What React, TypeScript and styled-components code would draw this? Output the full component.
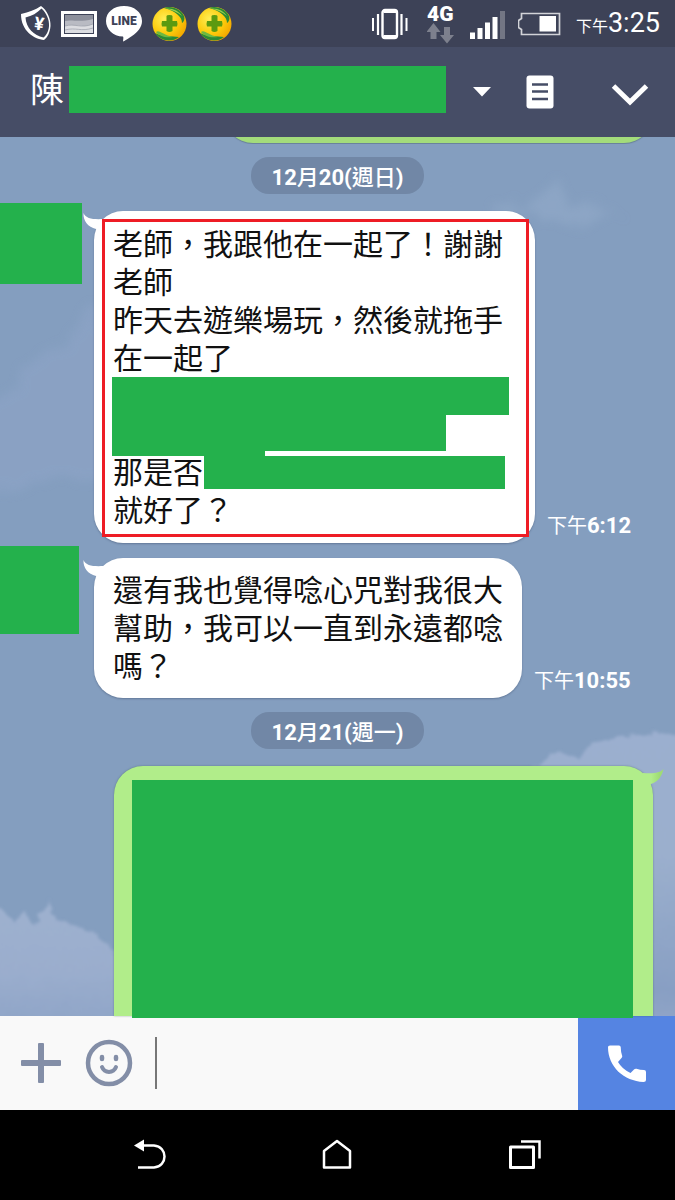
import React from 'react';
import styled, { createGlobalStyle } from 'styled-components';

const GlobalStyle = createGlobalStyle`
  * { box-sizing: border-box; }
  body {
    margin: 0;
    background: #000;
    font-family: Roboto, "Noto Sans CJK TC", sans-serif;
  }
  button {
    display: flex;
    align-items: center;
    justify-content: center;
    margin: 0;
    padding: 0;
    border: 0;
    background: none;
    cursor: pointer;
  }
  svg { display: block; flex: none; }
`;

const MASK = '#24b14c';

const Screen = styled.div`
  display: flex;
  flex-direction: column;
  min-height: 100vh;
`;

const StatusBar = styled.div`
  display: flex;
  align-items: center;
  justify-content: space-between;
  height: 47px;
  padding: 0 15px 0 20px;
  background: #3d4257;
  color: #fff;
`;

const IconGroup = styled.div<{ $gap: number }>`
  display: flex;
  align-items: center;
  gap: ${(p) => p.$gap}px;
`;

const Clock = styled.time`
  display: flex;
  align-items: baseline;
  font-size: 27px;
  line-height: 32px;
`;

const Meridiem = styled.span<{ $size: number }>`
  font-family: "Noto Sans CJK TC", sans-serif;
  font-size: ${(p) => p.$size}px;
  font-weight: 400;
`;

const Header = styled.header`
  display: flex;
  align-items: center;
  height: 90px;
  padding: 0 21px 0 30px;
  background: #464d66;
  color: #fff;
`;

const Title = styled.h1`
  display: flex;
  flex: 0 1 416px;
  align-items: center;
  gap: 5px;
  margin: 0;
  padding-bottom: 5px;
  font-size: 34px;
  font-weight: 400;
  line-height: 48px;
`;

const NameMask = styled.span`
  flex: 1;
  height: 47px;
  background: ${MASK};
`;

const MenuButton = styled.button`
  width: 72px;
  height: 60px;
`;

const NoteButton = styled.button`
  width: 44px;
  height: 60px;
`;

const CollapseButton = styled.button`
  width: 48px;
  height: 60px;
  margin-left: auto;
  padding-top: 6px;
`;

const Chat = styled.main`
  position: relative;
  display: flex;
  flex: 1;
  flex-direction: column;
  background: #849ebf;
  isolation: isolate;
`;

const Sky = styled.svg`
  position: absolute;
  inset: 0;
  z-index: -1;
  width: 100%;
  height: 100%;
`;

const ScrolledOff = styled.div`
  display: flex;
  flex-direction: column;
  justify-content: flex-end;
  align-items: flex-end;
  height: 7px;
  padding-right: 22px;
  overflow: hidden;
`;

const ScrolledBubble = styled.div`
  flex: none;
  width: 429px;
  height: 60px;
  margin-bottom: 1px;
  border-radius: 29px;
  background: #a3dc7b;
  box-shadow: 0 1px 1px rgba(40, 60, 60, 0.3);
`;

const DatePill = styled.div`
  align-self: center;
  height: 37px;
  padding: 0 21px;
  border-radius: 18px;
  background: #7187a6;
  color: #fff;
  font-size: 22px;
  font-weight: 700;
  line-height: 37px;
  white-space: nowrap;
`;

const Cjk = styled.span`
  font-family: "Noto Sans CJK TC", sans-serif;
  font-weight: 500;
`;

const Day = styled.section`
  display: flex;
  flex-direction: column;
  margin-top: 13px;

  & + & { flex: 1; margin-top: 14px; }
`;

const Received = styled.div<{ $drop: number }>`
  display: flex;
  align-items: flex-start;
  margin-top: ${(p) => (p.$drop === 8 ? 9 : 3)}px;

  > :not(:first-child) { margin-top: ${(p) => p.$drop}px; }
`;

const AvatarColumn = styled.div`
  flex: none;
  width: 94px;
`;

const AvatarMask = styled.div<{ $w: number; $h: number }>`
  width: ${(p) => p.$w}px;
  height: ${(p) => p.$h}px;
  background: ${MASK};
`;

const Bubble = styled.div<{ $measure: number; $pad: number }>`
  position: relative;
  flex: 0 1 ${(p) => p.$measure + 38}px;
  padding: ${(p) => p.$pad - 2}px 19px ${(p) => p.$pad + 2}px;
  border-radius: 29px;
  background: #fff;
  box-shadow: 0 1px 2px rgba(50, 65, 95, 0.4);
  color: #111;
  font-family: "Noto Sans CJK TC", sans-serif;
  font-size: 30px;
  line-height: 38px;
`;

const Paragraph = styled.p`
  margin: 0;
`;

const MaskLine = styled.div`
  display: flex;
  height: 38px;
  padding-top: 2px;
  margin-left: -1px;
`;

const MixedLine = styled.div`
  display: flex;
  gap: 1px;
  height: 38px;
`;

const MaskBar = styled.span<{ $w: number; $h: number }>`
  width: ${(p) => p.$w}px;
  height: ${(p) => p.$h}px;
  background: ${MASK};
`;

const InlineMaskBar = styled(MaskBar)`
  margin-top: 5px;
`;

const SteppedMaskBar = styled(MaskBar)`
  position: relative;

  &::after {
    position: absolute;
    top: 100%;
    left: 0;
    width: 153px;
    height: 5px;
    background: ${MASK};
    content: "";
  }
`;

const Highlight = styled.div`
  position: absolute;
  inset: 8px 6px 6px 8px;
  border: 3px solid #ee1c25;
  pointer-events: none;
`;

const LeftTail = styled.svg`
  position: absolute;
  top: 2px;
  left: -11px;
`;

const RightTail = styled.svg`
  position: absolute;
  top: 2px;
  right: -11px;
`;

const Stamp = styled.time`
  align-self: flex-end;
  margin-left: 12px;
  padding-bottom: 4px;
  color: #fff;
  font-size: 22px;
  font-weight: 700;
  line-height: 26px;
  white-space: nowrap;
`;

const SentBubble = styled.div`
  position: relative;
  display: flex;
  flex: 1;
  min-height: 200px;
  margin: 17px 22px 0 114px;
  padding: 14px 20px 0 18px;
  border-radius: 29px 29px 0 0;
  background: #b1ed8a;
  box-shadow: 0 0 2px rgba(50, 80, 80, 0.5);
`;

const SentMask = styled.div`
  position: relative;
  flex: 1;
  margin-bottom: -2px;
  background: ${MASK};
`;

const Composer = styled.form`
  display: flex;
  align-items: stretch;
  height: 94px;
  background: #f9f9f9;
`;

const ChatLayer = styled.div`
  position: relative;
  z-index: 1;
  display: flex;
  flex: 1;
  flex-direction: column;
`;

const ToolButtons = styled.div`
  display: flex;
  align-items: center;
  gap: 19px;
  padding: 0 22px 0 16px;
`;

const ToolButton = styled.button`
  width: 49px;
  height: 60px;
`;

const MessageInput = styled.input`
  flex: 1;
  align-self: center;
  min-width: 0;
  height: 52px;
  margin: 0;
  padding: 0 12px;
  border: 0;
  border-left: 2px solid #777;
  outline: 0;
  background: transparent;
  color: #111;
  font-size: 28px;
`;

const CallButton = styled.button`
  width: 97px;
  background: #5584e2;
`;

const NavBar = styled.nav`
  display: grid;
  grid-template-columns: repeat(3, 1fr);
  height: 90px;
  padding: 0 56px;
  background: #000;
`;

const ShieldIcon = () => (
  <svg width="32" height="36" viewBox="0 0 32 36" fill="none" aria-hidden="true">
    <path d="M1 8 C9 6 15 4 21 0 C27 4 31 13 30.500 20 C30 27 27 32 24 34 C14 33 1 25 1 8Z" fill="#fff" />
    <path d="M5.500 11.500 C12 10 17 7 21.500 2.500 C26.500 7 29.500 14 29 20 C28.500 26 26 29.500 23.500 31.500 C14 29.500 6 22 5.500 11.500Z" fill="#3d4257" />
    <text x="19" y="24" transform="rotate(8 19 19)" textAnchor="middle" fontFamily="Roboto" fontSize="18" fontWeight="700" fill="#fff">¥</text>
  </svg>
);

const PictureIcon = () => (
  <svg width="36" height="28" viewBox="0 0 36 28" aria-hidden="true">
    <path d="M0 1H36V27H0Z M3 4V24H33V4Z" fill="#fff" fillRule="evenodd" />
    <rect x="4" y="5" width="28" height="18" fill="#8d909c" />
    <path d="M4 11 C12 9 17 13 32 9 V23 H4Z" fill="#b9bbc3" />
    <path d="M4 16 C14 13 20 19 32 14 V23 H4Z" fill="#dcdde1" />
    <path d="M4 16 C14 13 20 19 32 14 M4 20 C15 17 20 22 32 18" stroke="#9a9da8" strokeWidth=".7" fill="none" />
  </svg>
);

const LineIcon = () => (
  <svg width="36" height="36" viewBox="0 0 36 36" aria-hidden="true">
    <path d="M18 0 C28 0 36 6 36 15 C36 21 32 26 26 30 C23 32 20 34 17.500 35.500 C16.500 35 18 32 17 30.500 C7 30.500 0 23 0 15 C0 6 8 0 18 0Z" fill="#fff" />
    <text x="18" y="19" textAnchor="middle" fontFamily="Roboto" fontSize="12" fontWeight="900" fill="#3d4257">LINE</text>
  </svg>
);

const HealthIcon = ({ id }: { id: string }) => (
  <svg width="36" height="36" viewBox="0 0 36 36" aria-hidden="true">
    <defs>
      <radialGradient id={id} cx=".35" cy=".35" r=".7">
        <stop offset="0" stopColor="#ffee55" />
        <stop offset=".6" stopColor="#fccb0c" />
        <stop offset="1" stopColor="#f3a800" />
      </radialGradient>
    </defs>
    <circle cx="18.500" cy="18" r="17" fill={`url(#${id})`} />
    <path d="M13 2 C20 -1 30 3 33 10 C34 13 33 16 31 17 C31 11 25 5 13 2Z" fill="#2b8a35" />
    <path d="M15 2.500 C22 2 28 5 31 10 C26 6 21 4 15 2.500Z" fill="#9ad04c" />
    <path d="M4 27 C12 31 21 30 28 31 C21 37 9 35 4 27Z" fill="#2b8a35" />
    <path d="M5 26 C8 23 12 29 22 31 C14 32 8 30 5 26Z" fill="#6cb842" />
    <path d="M15.500 10 Q15.500 9 18.500 9 Q21.500 9 21.500 10 V15 H26 Q27 18 26 20.500 H21.500 V25 Q18.500 27 15.500 25 V20.500 H11 Q10 18 11 15 H15.500Z" fill="#5c9a10" />
  </svg>
);

const VibrateIcon = () => (
  <svg width="43" height="32" viewBox="0 0 43 32" fill="none" stroke="#fff" aria-hidden="true">
    <rect x="10.500" y="2" width="14.500" height="28" rx="2.500" strokeWidth="2.400" />
    <path d="M11.500 3.500H24.500 M11.500 28.500H24.500" strokeWidth="3" />
    <path d="M6 6V27 M29.500 6V27" strokeWidth="2.200" />
    <path d="M1 10V23 M34.500 10V23" strokeWidth="2" />
  </svg>
);

const NetworkIcon = () => (
  <svg width="31" height="46" viewBox="0 -3 31 46" aria-hidden="true">
    <text x="0" y="17" fontFamily="Roboto" fontSize="21" fontWeight="900" fill="#fff">4G</text>
    <path d="M6.500 19 L13.500 28 H9.500 V35 H3.500 V28 H-.5Z M20 39.500 L27 31 H23 V23 H17 V31 H13Z" fill="#7d808d" />
  </svg>
);

const SignalIcon = () => (
  <svg width="36" height="30" viewBox="0 -1 36 30" fill="#fff" aria-hidden="true">
    <path d="M0 22.500h5V29H0Z M7.500 18h5V29h-5Z M15 12.500h5V29h-5Z M22.500 7h5V29h-5Z" />
    <path d="M30 1h5V29h-5Z" fill="#737684" />
  </svg>
);

const BatteryIcon = () => (
  <svg width="46" height="24" viewBox="1 0 46 24" fill="none" aria-hidden="true">
    <path d="M4.500 1.500H42.500V22.500H4.500V17.500L1.500 15.500V8.500L4.500 6.500Z" stroke="#d2d3d8" strokeWidth="1.700" />
    <rect x="22.500" y="4" width="16.500" height="15.500" fill="#fff" />
  </svg>
);

const SkyBackdrop = () => (
  <Sky viewBox="0 0 675 880" preserveAspectRatio="none" aria-hidden="true">
    <defs>
      <filter id="billow" x="-20%" y="-20%" width="140%" height="140%">
        <feTurbulence type="fractalNoise" baseFrequency=".07" numOctaves="4" seed="7" result="n" />
        <feDisplacementMap in="SourceGraphic" in2="n" scale="14" xChannelSelector="R" yChannelSelector="G" />
        <feGaussianBlur stdDeviation="1.500" />
      </filter>
      <filter id="haze" x="-40%" y="-40%" width="180%" height="180%">
        <feTurbulence type="fractalNoise" baseFrequency=".05" numOctaves="4" seed="3" result="n" />
        <feDisplacementMap in="SourceGraphic" in2="n" scale="30" xChannelSelector="R" yChannelSelector="G" />
        <feGaussianBlur stdDeviation="5" />
      </filter>
      <linearGradient id="bank" x1="0" y1="0" x2="0" y2="1">
        <stop offset="0" stopColor="#9eb1cf" />
        <stop offset=".5" stopColor="#9aadcd" />
        <stop offset="1" stopColor="#8aa1c5" />
      </linearGradient>
      <linearGradient id="bankFade" x1="0" y1="0" x2="0" y2="1">
        <stop offset="0" stopColor="#9bafcf" />
        <stop offset=".4" stopColor="#9bafcd" />
        <stop offset=".85" stopColor="#889fc3" />
        <stop offset="1" stopColor="#94a7c9" />
      </linearGradient>
    </defs>
    <path d="M-30 290 L20 240 L40 220 L70 200 L92 170 L120 220 V350 L60 340 L-30 360Z" fill="#8ea4c7" opacity=".6" filter="url(#haze)" />
    <path d="M490 72 L515 62 L532 70 L548 46 L562 44 L574 64 L620 78 L570 90 L535 78Z" fill="#93aac9" opacity=".6" filter="url(#haze)" />
    <path d="M-20 766 L4 774 L14 786 L24 776 L34 786 L46 776 L50 764 L55 784 L80 792 L100 802 L116 816 L150 830 V910 H-20Z" fill="url(#bank)" filter="url(#billow)" />
    <path d="M528 636 L545 624 L560 616 L576 622 L590 610 L616 602 L640 599 L656 597 L700 599 V900 L600 900 V700 L528 640Z" fill="url(#bankFade)" filter="url(#billow)" />
  </Sky>
);

const BackIcon = () => (
  <svg width="32" height="32" viewBox="0 0 32 32" fill="none" aria-hidden="true">
    <path d="M8 6.500H20 C34 7.500 34 27.500 20 28.500H4" stroke="#fff" strokeWidth="2.500" />
    <path d="M0 6.500 L10 .5 V12.500Z" fill="#fff" />
  </svg>
);

const HomeIcon = () => (
  <svg width="32" height="32" viewBox="0 0 32 32" fill="none" aria-hidden="true">
    <path d="M3 28.500V12L16 2L29 12V28.500Z" stroke="#fff" strokeWidth="2.500" strokeLinejoin="round" />
  </svg>
);

const RecentsIcon = () => (
  <svg width="32" height="32" viewBox="0 0 32 32" fill="none" stroke="#fff" strokeWidth="2.500" aria-hidden="true">
    <rect x="1.500" y="8" width="23" height="20.500" strokeWidth="3" strokeLinejoin="round" />
    <path d="M12 2.500H30.500V19.500" />
  </svg>
);

const Tail = () => (
  <LeftTail width="24" height="20" viewBox="0 0 24 20" aria-hidden="true">
    <path d="M.5 0 C3 6 10 6.500 21 6 V15 L13 16 C5 14 0 8 .5 0Z" fill="#fff" />
  </LeftTail>
);

export default function App() {
  return (
    <Screen>
      <GlobalStyle />
      <StatusBar>
        <IconGroup $gap={9}>
          <ShieldIcon />
          <PictureIcon />
          <LineIcon />
          <HealthIcon id="health-a" />
          <HealthIcon id="health-b" />
        </IconGroup>
        <IconGroup $gap={12}>
          <VibrateIcon />
          <NetworkIcon />
          <SignalIcon />
          <BatteryIcon />
          <Clock><Meridiem $size={16}>下午</Meridiem>3:25</Clock>
        </IconGroup>
      </StatusBar>

      <Header>
        <Title>陳<NameMask /></Title>
        <MenuButton type="button" aria-label="Menu">
          <svg width="18" height="10" viewBox="0 0 18 10"><path d="M0 0H18L9 9.500Z" fill="#fff" /></svg>
        </MenuButton>
        <NoteButton type="button" aria-label="Notes">
          <svg width="28" height="34" viewBox="0 0 28 34">
            <rect x=".5" y=".5" width="27" height="33" rx="3" fill="#fff" />
            <path d="M6 9.500H22 M6 16.500H22 M6 24H22" stroke="#464d66" strokeWidth="2.500" />
          </svg>
        </NoteButton>
        <CollapseButton type="button" aria-label="Collapse">
          <svg width="38" height="24" viewBox="0 0 38 24"><path d="M2.500 3L19 19L35.500 3" fill="none" stroke="#fff" strokeWidth="5" /></svg>
        </CollapseButton>
      </Header>

      <Chat>
        <SkyBackdrop />
        <ChatLayer>
          <ScrolledOff><ScrolledBubble /></ScrolledOff>

          <Day>
            <DatePill>12<Cjk>月</Cjk>20(<Cjk>週日</Cjk>)</DatePill>
            <Received $drop={8}>
              <AvatarColumn><AvatarMask $w={82} $h={81} /></AvatarColumn>
              <Bubble $measure={403} $pad={14}>
                <Tail />
                <Paragraph>老師，我跟他在一起了！謝謝老師</Paragraph>
                <Paragraph>昨天去遊樂場玩，然後就拖手在一起了</Paragraph>
                <MaskLine><MaskBar $w={397} $h={38} /></MaskLine>
                <MaskLine><SteppedMaskBar $w={334} $h={36} /></MaskLine>
                <MixedLine>
                  <Paragraph>那是否</Paragraph>
                  <InlineMaskBar $w={301} $h={33} />
                </MixedLine>
                <Paragraph>就好了？</Paragraph>
                <Highlight />
              </Bubble>
              <Stamp><Meridiem $size={20}>下午</Meridiem>6:12</Stamp>
            </Received>
            <Received $drop={12}>
              <AvatarColumn><AvatarMask $w={79} $h={88} /></AvatarColumn>
              <Bubble $measure={390} $pad={13}>
                <Tail />
                <Paragraph>還有我也覺得唸心咒對我很大幫助，我可以一直到永遠都唸嗎？</Paragraph>
              </Bubble>
              <Stamp><Meridiem $size={20}>下午</Meridiem>10:55</Stamp>
            </Received>
          </Day>

          <Day>
            <DatePill>12<Cjk>月</Cjk>21(<Cjk>週一</Cjk>)</DatePill>
            <SentBubble>
              <RightTail width="25" height="20" viewBox="0 0 25 20" aria-hidden="true">
                <defs>
                  <linearGradient id="tail">
                    <stop offset=".4" stopColor="#b1ed8a" />
                    <stop offset=".8" stopColor="#9fdc74" />
                  </linearGradient>
                </defs>
                <path d="M24.500 1 C21 5 14 6 4 5 V15 L12 16 C19 14 23 8 24.500 1Z" fill="url(#tail)" />
              </RightTail>
              <SentMask />
            </SentBubble>
          </Day>
        </ChatLayer>
      </Chat>

      <Composer onSubmit={(e) => e.preventDefault()}>
        <ToolButtons>
          <ToolButton type="button" aria-label="Add attachment">
            <svg width="40" height="40" viewBox="0 0 40 40" fill="#838ea7">
              <rect y="17" width="40" height="6" rx="1" />
              <rect x="17" width="6" height="40" rx="1" />
            </svg>
          </ToolButton>
          <ToolButton type="button" aria-label="Stickers">
            <svg width="48" height="48" viewBox="0 0 48 48" fill="none" stroke="#838ea7">
              <circle cx="24" cy="24" r="21" strokeWidth="4.500" />
              <path d="M17 28 C19.500 34.500 28.500 34.500 31 28" strokeWidth="4" strokeLinecap="round" />
              <path d="M17 18V20 M31 18V20" strokeWidth="4.500" strokeLinecap="round" />
            </svg>
          </ToolButton>
        </ToolButtons>
        <MessageInput type="text" aria-label="Message" />
        <CallButton type="button" aria-label="Call">
          <svg width="38" height="37" viewBox="0 0 38 37">
            <path d="M0 2 Q0 .5 2 .5 H11 Q12.500 .5 12.700 2 Q12.800 7 14.200 11 Q14.500 12 13.500 13 L10 17 Q14 24 22.500 28 L26 24.500 Q27 23.500 28.500 23.800 Q32 25 36 25 Q38 25.200 38 27 V35 Q38 37 35.500 37 C16 36 0 22 0 2Z" fill="#fff" />
          </svg>
        </CallButton>
      </Composer>

      <NavBar>
        <button type="button" aria-label="Back"><BackIcon /></button>
        <button type="button" aria-label="Home"><HomeIcon /></button>
        <button type="button" aria-label="Recent apps"><RecentsIcon /></button>
      </NavBar>
    </Screen>
  );
}
